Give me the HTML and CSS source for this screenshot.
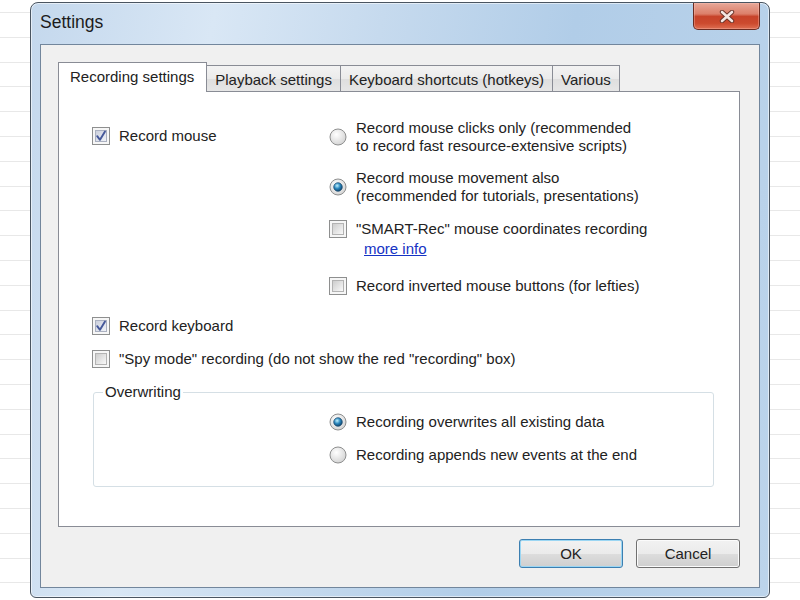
FILE: index.html
```html
<!DOCTYPE html>
<html>
<head>
<meta charset="utf-8">
<title>Settings</title>
<link rel="stylesheet" href="styles.css">
</head>
<body>
<svg class="defs" aria-hidden="true">
  <defs>
    <linearGradient id="boxg" x1="0" y1="0" x2="1" y2="1">
      <stop offset="0" stop-color="#cbcbcb"/>
      <stop offset="1" stop-color="#fbfbfb"/>
    </linearGradient>
    <linearGradient id="boxon" x1="0" y1="0" x2="1" y2="1">
      <stop offset="0" stop-color="#c9cedb"/>
      <stop offset="1" stop-color="#f2f4f9"/>
    </linearGradient>
    <radialGradient id="rbg" cx="0.4" cy="0.35" r="0.75">
      <stop offset="0" stop-color="#ffffff"/>
      <stop offset="1" stop-color="#cfcfcf"/>
    </radialGradient>
    <radialGradient id="dot" cx="0.4" cy="0.35" r="0.7">
      <stop offset="0" stop-color="#bdf1ff"/>
      <stop offset="0.5" stop-color="#2a86bd"/>
      <stop offset="1" stop-color="#0c3b60"/>
    </radialGradient>
    <symbol id="cb" viewBox="0 0 18 18">
      <rect x="0.5" y="0.5" width="17" height="17" fill="#f6f6f6" stroke="#8e8f8f"/>
      <rect x="3.5" y="3.5" width="11" height="11" fill="url(#boxg)" stroke="#b3b3b3"/>
    </symbol>
    <symbol id="cbon" viewBox="0 0 18 18">
      <rect x="0.5" y="0.5" width="17" height="17" fill="#f6f6f6" stroke="#8e8f8f"/>
      <rect x="3.5" y="3.5" width="11" height="11" fill="url(#boxon)" stroke="#aab0c0"/>
      <path d="M5.2 9.2 L8 12.8 L13 4.6" fill="none" stroke="#45589a" stroke-width="1.9" stroke-linecap="round" stroke-linejoin="round"/>
    </symbol>
    <symbol id="rb" viewBox="0 0 18 18">
      <circle cx="9" cy="9" r="8" fill="url(#rbg)" stroke="#8e8f8f"/>
    </symbol>
    <symbol id="rbon" viewBox="0 0 18 18">
      <circle cx="9" cy="9" r="8" fill="url(#rbg)" stroke="#8e8f8f"/>
      <circle cx="9" cy="9" r="4.3" fill="url(#dot)" stroke="#1b4a70" stroke-width="0.7"/>
    </symbol>
  </defs>
</svg>

<div class="window">
  <div class="titlebar">
    <span class="title">Settings</span>
    <div class="close">
      <svg width="16" height="13" viewBox="0 0 16 13">
        <path d="M3 2 L13 11 M13 2 L3 11" stroke="#6a3328" stroke-width="4.4" stroke-linecap="round"/>
        <path d="M3 2 L13 11 M13 2 L3 11" stroke="#f4e6e2" stroke-width="2.6" stroke-linecap="round"/>
      </svg>
    </div>
  </div>

  <div class="client">
    <div class="tabs">
      <div class="tab active">Recording settings</div>
      <div class="tab">Playback settings</div>
      <div class="tab">Keyboard shortcuts (hotkeys)</div>
      <div class="tab">Various</div>
    </div>

    <div class="panel">
      <div class="mouse-section">
        <div class="left-col">
          <div class="opt cbrow">
            <svg class="box"><use href="#cbon"/></svg>
            <span>Record mouse</span>
          </div>
        </div>
        <div class="right-col">
          <div class="opt rrow">
            <svg class="box"><use href="#rb"/></svg>
            <span>Record mouse clicks only (recommended<br>to record fast resource-extensive scripts)</span>
          </div>
          <div class="opt rrow r2">
            <svg class="box"><use href="#rbon"/></svg>
            <span>Record mouse movement also<br>(recommended for tutorials, presentations)</span>
          </div>
          <div class="smart">
            <div class="opt">
              <svg class="box"><use href="#cb"/></svg>
              <span>"SMART-Rec" mouse coordinates recording</span>
            </div>
            <a class="more" href="#">more info</a>
          </div>
          <div class="opt inverted">
            <svg class="box"><use href="#cb"/></svg>
            <span>Record inverted mouse buttons (for lefties)</span>
          </div>
        </div>
      </div>

      <div class="opt keyboard">
        <svg class="box"><use href="#cbon"/></svg>
        <span>Record keyboard</span>
      </div>
      <div class="opt spy">
        <svg class="box"><use href="#cb"/></svg>
        <span>"Spy mode" recording (do not show the red "recording" box)</span>
      </div>

      <fieldset class="group">
        <legend>Overwriting</legend>
        <div class="opt grow first">
          <svg class="box"><use href="#rbon"/></svg>
          <span>Recording overwrites all existing data</span>
        </div>
        <div class="opt grow second">
          <svg class="box"><use href="#rb"/></svg>
          <span>Recording appends new events at the end</span>
        </div>
      </fieldset>
    </div>

    <div class="buttons">
      <button class="btn default">OK</button>
      <button class="btn">Cancel</button>
    </div>
  </div>
</div>
</body>
</html>
```

FILE: styles.css
```css
html, body {
  margin: 0;
  padding: 0;
  height: 600px;
  overflow: hidden;
}

body {
  font-family: "Liberation Sans", Arial, sans-serif;
  font-size: 15px;
  line-height: 18px;
  color: #222;
  background-color: #ffffff;
  background-image: repeating-linear-gradient(to bottom,
    transparent 0px, transparent 12px,
    #e8e8e8 12px, #e8e8e8 13px,
    transparent 13px, transparent 24.8px);
}

.defs {
  position: absolute;
  width: 0;
  height: 0;
  overflow: hidden;
}

/* ---------- window frame ---------- */
.window {
  margin: 2px 0 0 30px;
  width: 740px;
  height: 596px;
  box-sizing: border-box;
  border: 1px solid #4a5561;
  border-radius: 8px 8px 6px 6px;
  padding: 0 9px 9px 9px;
  display: flex;
  flex-direction: column;
  background: linear-gradient(100deg, #c4d8ed 0%, #d9e7f5 22%, #c6daee 42%, #b1cde8 65%, #bcd4eb 100%);
  box-shadow: inset 0 0 0 1px rgba(255, 255, 255, 0.55);
}

.titlebar {
  height: 41px;
  display: flex;
  align-items: flex-start;
  flex: none;
}

.title {
  font-size: 17.5px;
  line-height: 20px;
  padding-top: 9px;
  color: #1c1c1c;
}

.close {
  margin-left: auto;
  width: 67px;
  height: 27px;
  box-sizing: border-box;
  border: 1px solid #6b2c22;
  border-top: none;
  border-radius: 0 0 5px 5px;
  background: linear-gradient(to bottom, #e7a899 0%, #dc7f6a 42%, #c7432a 52%, #cc4a2e 78%, #de6f52 100%);
  box-shadow: inset 0 0 0 1px rgba(255, 200, 190, 0.35);
  display: flex;
  align-items: center;
  justify-content: center;
}

/* ---------- client area ---------- */
.client {
  flex: 1;
  border: 1px solid #72869c;
  background: #f0f0f0;
  padding: 17px 19px 0 17px;
  display: flex;
  flex-direction: column;
}

.tabs {
  display: flex;
  align-items: flex-end;
  height: 29px;
}

.tab {
  box-sizing: border-box;
  height: 26px;
  padding: 5px 8px 0 8px;
  border: 1px solid #898c95;
  border-bottom: none;
  background: linear-gradient(to bottom, #f3f3f3 0%, #ebebeb 50%, #dedede 51%, #e6e6e6 100%);
  white-space: nowrap;
  color: #222;
}

.tab + .tab {
  margin-left: -1px;
}

.tab.active {
  height: 30px;
  margin-bottom: -1px;
  padding: 5px 12px 0 11px;
  background: #ffffff;
  position: relative;
  z-index: 1;
}

.panel {
  box-sizing: border-box;
  height: 436px;
  border: 1px solid #898c95;
  background: #ffffff;
  padding: 27px 0 0 33px;
}

/* ---------- options ---------- */
.opt {
  display: flex;
  align-items: center;
  gap: 9px;
}

.box {
  width: 18px;
  height: 18px;
  flex: none;
}

.mouse-section {
  display: grid;
  grid-template-columns: 237px 1fr;
}

.left-col .cbrow {
  margin-top: 8px;
}

.r2 {
  margin-top: 14px;
}

.smart {
  margin-top: 15px;
}

.more {
  display: block;
  margin: 2px 0 0 35px;
  color: #1533c4;
  text-decoration: underline;
  width: max-content;
}

.inverted {
  margin-top: 19px;
}

.keyboard {
  margin-top: 22px;
}

.spy {
  margin-top: 15px;
}

.group {
  margin: 15px 0 0 1px;
  width: 621px;
  box-sizing: border-box;
  padding: 0 0 22px 9px;
  border: 1px solid #d5dfe5;
  border-radius: 3px;
  min-width: 0;
}

.group legend {
  padding: 0 2px;
  line-height: 18px;
}

.grow {
  margin-left: 226px;
}

.grow.first {
  margin-top: 12px;
}

.grow.second {
  margin-top: 15px;
}

/* ---------- buttons ---------- */
.buttons {
  display: flex;
  justify-content: flex-end;
  gap: 13px;
  margin-top: 12px;
}

.btn {
  width: 104px;
  height: 29px;
  box-sizing: border-box;
  font-family: "Liberation Sans", Arial, sans-serif;
  font-size: 15px;
  color: #222;
  border: 1px solid #707070;
  border-radius: 3px;
  background: linear-gradient(to bottom, #f2f2f2 0%, #ebebeb 50%, #dddddd 51%, #cfcfcf 100%);
  box-shadow: inset 0 0 0 1px #fbfbfb;
  padding: 0;
}

.btn.default {
  border-color: #3c7fb1;
  box-shadow: inset 0 0 0 1px #9bd6f3;
}
```
